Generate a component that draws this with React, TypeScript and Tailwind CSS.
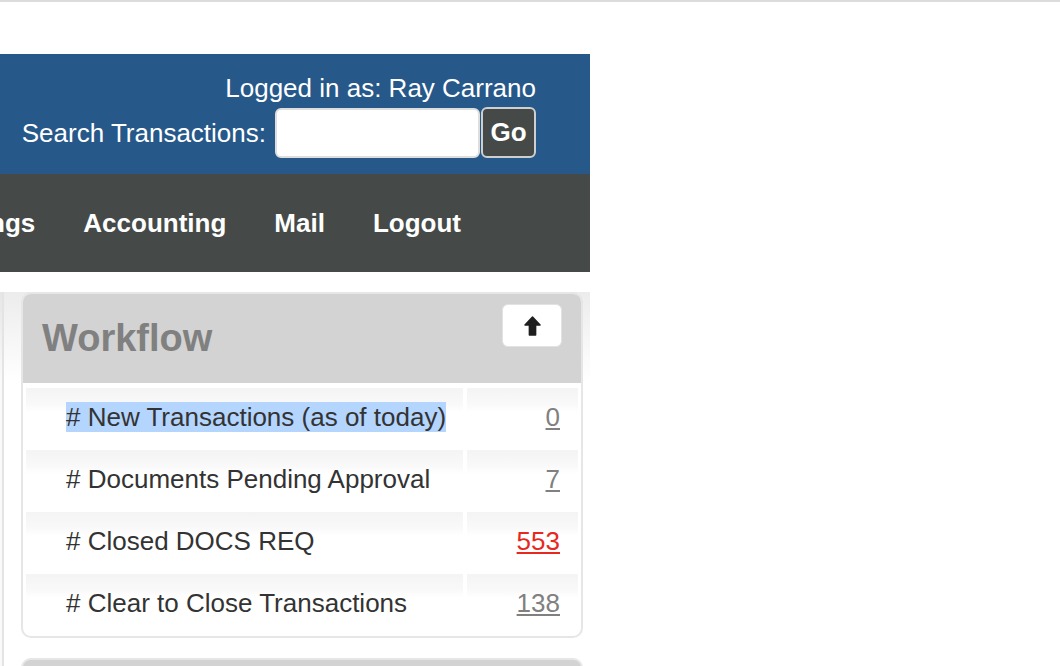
import React from 'react'

const ROWS = [
  { label: '# New Transactions (as of today)', val: '0', red: false, sel: true },
  { label: '# Documents Pending Approval', val: '7', red: false, sel: false },
  { label: '# Closed DOCS REQ', val: '553', red: true, sel: false },
  { label: '# Clear to Close Transactions', val: '138', red: false, sel: false },
]

const NAV = ['Settings', 'Accounting', 'Mail', 'Logout']

function ArrowUpIcon() {
  return (
    <svg width="17" height="20" viewBox="0 0 17 20">
      <path d="M8.5 1 L16 9 L11.6 9 L11.6 19 L5.4 19 L5.4 9 L1 9 Z" fill="#1f1f1f" stroke="#1f1f1f" strokeWidth="1.5" strokeLinejoin="round"/>
    </svg>
  )
}

export default function App() {
  return (
    <div className="w-[1060px] h-[666px] overflow-hidden bg-white border-t-2 border-[#dcdcdc] font-['Liberation_Sans',Arial,sans-serif]">
      <div className="w-[590px] mt-[52px]">
        {/* Blue header */}
        <div className="h-[120px] bg-[#265889] flex flex-col items-end pr-[54px] pt-[19px] text-white">
          <div className="text-[26px] leading-[30px]">Logged in as: Ray Carrano</div>
          <div className="flex items-center mt-[4px]">
            <span className="text-[26px] leading-[30px] mr-[9px]">Search Transactions:</span>
            <input className="w-[205px] h-[50px] bg-white rounded-md border-2 border-[#dedede] outline-none" />
            <button className="ml-[1px] w-[55px] h-[51px] bg-[#454a48] border-2 border-[#cfcfcf] rounded-md text-[26px] font-bold text-white">Go</button>
          </div>
        </div>

        {/* Nav */}
        <div className="h-[98px] bg-[#454a48] flex items-center justify-end overflow-hidden pr-[105px]">
          {NAV.map(n => (
            <span key={n} className="px-6 shrink-0 text-[26px] font-bold text-white">{n}</span>
          ))}
        </div>

        {/* Content */}
        <div className="mt-[20px] h-[380px] flex bg-[linear-gradient(to_bottom,#ececec,#ffffff_90px)]">
          <div className="w-[4px] shrink-0 border-r-2 border-[#e4e4e4] bg-[linear-gradient(to_bottom,#e6e6e6,#fafafa_90px)]"/>
          <div className="ml-[17px] w-[562px]">
            <div className="border-2 border-[#e6e6e6] rounded-[10px] overflow-hidden bg-white">
              <div className="h-[89px] bg-[#d3d3d3] flex items-start justify-between px-[19px]">
                <h2 className="mt-[22px] text-[38px] leading-[44px] font-bold text-[#808080]">Workflow</h2>
                <button className="mt-[10px] w-[60px] h-[43px] bg-white rounded-md border border-[#e2e2e2] flex items-center justify-center">
                  <ArrowUpIcon/>
                </button>
              </div>
              <div className="grid grid-cols-[437px_111px] gap-[4px] px-[3px] pt-[5px] pb-[4px]">
                {ROWS.map(r => (
                  <React.Fragment key={r.label}>
                    <div className="h-[58px] flex items-center pl-[40px] bg-[linear-gradient(to_bottom,#f4f4f4,#f9f9f9_16px,#ffffff_24px)]">
                      <span className={`text-[26px] leading-[30px] text-[#333] ${r.sel ? 'bg-[#b4d5fe]' : ''}`}>{r.label}</span>
                    </div>
                    <div className="h-[58px] flex items-center justify-end pr-[18px] bg-[linear-gradient(to_bottom,#f4f4f4,#f9f9f9_16px,#ffffff_24px)]">
                      <a href="#" className={`text-[26px] leading-[30px] underline underline-offset-2 ${r.red ? 'text-[#e8281e]' : 'text-[#808080]'}`}>{r.val}</a>
                    </div>
                  </React.Fragment>
                ))}
              </div>
            </div>
            <div className="mt-[20px] h-[40px] border-2 border-[#e6e6e6] rounded-t-[10px] bg-[#d3d3d3]"/>
          </div>
        </div>
      </div>
    </div>
  )
}
